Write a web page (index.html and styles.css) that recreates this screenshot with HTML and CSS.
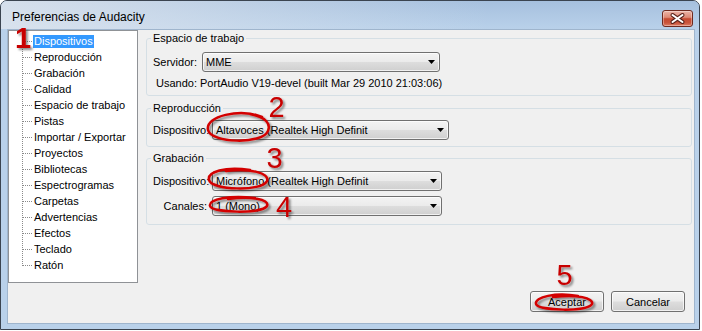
FILE: index.html
```html
<!DOCTYPE html>
<html lang="es">
<head>
<meta charset="utf-8">
<title>Preferencias de Audacity</title>
<link rel="stylesheet" href="styles.css">
</head>
<body>
<div class="window">
  <div class="titlebar">
    <span class="title">Preferencias de Audacity</span>
    <button class="close" aria-label="Cerrar">
      <svg width="31" height="17" viewBox="0 0 31 17">
        <path d="M10.5 5 L20.5 12 M20.5 5 L10.5 12" stroke="#5a231b" stroke-width="4" stroke-linecap="round"/>
        <path d="M10.5 5 L20.5 12 M20.5 5 L10.5 12" stroke="#ffffff" stroke-width="2" stroke-linecap="round"/>
      </svg>
    </button>
  </div>
  <div class="frame">
    <div class="client">
      <div class="main">
        <ul class="tree">
          <li class="selected"><span>Dispositivos</span></li>
          <li><span>Reproducción</span></li>
          <li><span>Grabación</span></li>
          <li><span>Calidad</span></li>
          <li><span>Espacio de trabajo</span></li>
          <li><span>Pistas</span></li>
          <li><span>Importar / Exportar</span></li>
          <li><span>Proyectos</span></li>
          <li><span>Bibliotecas</span></li>
          <li><span>Espectrogramas</span></li>
          <li><span>Carpetas</span></li>
          <li><span>Advertencias</span></li>
          <li><span>Efectos</span></li>
          <li><span>Teclado</span></li>
          <li><span>Ratón</span></li>
        </ul>
        <div class="pane">
          <fieldset class="group g1">
            <legend>Espacio de trabajo</legend>
            <div class="row">
              <span class="lbl left">Servidor:</span>
              <div class="combo"><span>MME</span></div>
            </div>
            <div class="info">Usando: PortAudio V19-devel (built Mar 29 2010 21:03:06)</div>
          </fieldset>
          <fieldset class="group g2">
            <legend>Reproducción</legend>
            <div class="row">
              <span class="lbl">Dispositivo:</span>
              <div class="combo"><span>Altavoces (Realtek High Definit</span></div>
            </div>
          </fieldset>
          <fieldset class="group g3">
            <legend>Grabación</legend>
            <div class="row">
              <span class="lbl">Dispositivo:</span>
              <div class="combo"><span>Micrófono (Realtek High Definit</span></div>
            </div>
            <div class="row second">
              <span class="lbl">Canales:</span>
              <div class="combo"><span>1 (Mono)</span></div>
            </div>
          </fieldset>
        </div>
      </div>
      <div class="buttons">
        <button class="btn">Aceptar</button>
        <button class="btn">Cancelar</button>
      </div>
    </div>
  </div>
</div>
<svg class="annot" width="702" height="331" viewBox="0 0 702 331">
  <defs>
    <filter id="sh" x="-30%" y="-30%" width="160%" height="160%">
      <feDropShadow dx="2" dy="2" stdDeviation="1.2" flood-color="#000" flood-opacity="0.45"/>
    </filter>
  </defs>
  <g class="marks" filter="url(#sh)">
    <path d="M262 117 C240 108, 205 116, 208 130 C211 143, 262 145, 268 131 C271 124, 266 117, 250 114"/>
    <path d="M250 170 C225 166, 207 172, 209 180 C211 190, 262 192, 267 181 C270 173, 250 168, 226 171"/>
    <path d="M255 198 C230 195, 208 199, 210 206 C212 213, 262 214, 267 206 C270 199, 250 196, 228 199"/>
    <path d="M578 296 C556 292, 534 297, 536 304 C538 311, 588 312, 592 304 C594 298, 577 294, 553 297"/>
  </g>
  <g class="nums" filter="url(#sh)">
    <text x="23" y="48" class="bold">1</text>
    <text x="276.5" y="117">2</text>
    <text x="274.5" y="168">3</text>
    <text x="284" y="217">4</text>
    <text x="564.5" y="285">5</text>
  </g>
</svg>
</body>
</html>
```
FILE: styles.css
```css
* { box-sizing: border-box; }
html, body { margin: 0; padding: 0; background: #ffffff; }
body {
  position: relative;
  width: 702px;
  height: 331px;
  overflow: hidden;
  font-family: "Liberation Sans", Arial, sans-serif;
  font-size: 11px;
  color: #000;
}
.window {
  width: 700px;
  height: 330px;
  border: 1px solid #3b4450;
  border-radius: 7px 7px 0 0;
  background: #b9d1ea;
  display: flex;
  flex-direction: column;
  overflow: hidden;
}
.titlebar {
  height: 28px;
  flex: none;
  display: flex;
  align-items: flex-start;
  background:
    linear-gradient(to right, rgba(222,229,238,0.85) 0%, rgba(222,229,238,0.4) 35%, rgba(222,229,238,0) 70%),
    linear-gradient(#a6c0de, #b9d1ea);
}
.title {
  padding: 9px 0 0 11px;
  font-size: 12px;
  line-height: 15px;
  color: #000;
}
.close {
  margin: 9px 6px 0 auto;
  width: 31px;
  height: 17px;
  padding: 0;
  border: 1px solid #6e2a20;
  border-radius: 3px;
  background: linear-gradient(#ecb5a8 0%, #de8a76 42%, #c54a31 52%, #c9543b 78%, #dd7d64 100%);
  box-shadow: inset 0 0 0 1px rgba(255,255,255,0.35);
  display: flex;
  align-items: center;
  justify-content: center;
}
.close svg { display: block; margin: -1px; }
.frame {
  flex: 1;
  display: flex;
  padding: 0 4px 5px 6px;
}
.client {
  flex: 1;
  display: flex;
  flex-direction: column;
  background: #f0f0f0;
  border: 1px solid #9fb5cd;
}
.main {
  display: flex;
  align-items: flex-start;
}
.tree {
  list-style: none;
  margin: 0;
  padding: 2px 0 0;
  width: 130px;
  height: 253px;
  flex: none;
  background: #fff;
  border: 1px solid #8f9296;
}
.tree li {
  height: 16px;
  display: flex;
  align-items: center;
  padding-left: 24px;
  white-space: nowrap;
  background:
    repeating-linear-gradient(to right, #8a8a8a 0 1px, transparent 1px 2px) 14px 8px / 9px 1px no-repeat,
    repeating-linear-gradient(to bottom, #8a8a8a 0 1px, transparent 1px 2px) 13px 0 / 1px 16px no-repeat;
}
.tree li:first-child {
  background-position: 14px 8px, 13px 8px;
  background-size: 9px 1px, 1px 8px;
}
.tree li:last-child {
  background-size: 9px 1px, 1px 9px;
}
.tree li span {
  padding: 0 1px;
  line-height: 13px;
}
.tree li.selected span {
  background: #3399ff;
  color: #fff;
}
.pane {
  flex: 1;
  margin-left: 8px;
  padding: 2px 2px 0 0;
  display: flex;
  flex-direction: column;
}
.group {
  margin: 0;
  min-width: 0;
  border: 1px solid #d5dfe5;
  border-radius: 3px;
  padding: 0 6px;
}
.group legend {
  padding: 0 2px;
  margin-left: -2px;
  line-height: 13px;
}
.g1 { padding-top: 7px; padding-bottom: 5px; }
.g2 { margin-top: 6px; padding-top: 5px; padding-bottom: 6px; }
.g3 { margin-top: 5px; padding-top: 6px; padding-bottom: 8px; }
.row {
  display: grid;
  align-items: center;
  column-gap: 5px;
}
.g1 .row { grid-template-columns: 44px 238px; }
.g2 .row { grid-template-columns: 54px 237px; }
.g3 .row { grid-template-columns: 54px 230px; }
.row.second { margin-top: 5px; }
.lbl { text-align: right; white-space: nowrap; }
.lbl.left { text-align: left; }
.info {
  margin-top: 5px;
  padding-left: 3px;
  line-height: 13px;
  white-space: nowrap;
}
.combo {
  height: 20px;
  display: flex;
  align-items: center;
  padding: 0 4px 0 3px;
  border: 1px solid #707070;
  border-radius: 3px;
  background: linear-gradient(#f3f3f3 0%, #ebebeb 48%, #dddddd 52%, #cfcfcf 100%);
  box-shadow: inset 0 0 0 1px rgba(255,255,255,0.7);
  white-space: nowrap;
  overflow: hidden;
}
.combo::after {
  content: "";
  flex: none;
  margin-left: auto;
  width: 7px;
  height: 4px;
  background: #000;
  clip-path: polygon(0 0, 100% 0, 50% 100%);
}
.buttons {
  display: flex;
  justify-content: flex-end;
  gap: 7px;
  padding: 8px 9px 0 0;
}
.btn {
  width: 74px;
  height: 21px;
  padding: 0;
  font-family: "Liberation Sans", Arial, sans-serif;
  font-size: 11px;
  color: #000;
  border: 1px solid #707070;
  border-radius: 3px;
  background: linear-gradient(#f3f3f3 0%, #ebebeb 48%, #dddddd 52%, #cfcfcf 100%);
  box-shadow: inset 0 0 0 1px rgba(255,255,255,0.7);
}
.annot {
  position: absolute;
  left: 0;
  top: 0;
  pointer-events: none;
}
.marks path {
  fill: none;
  stroke: #d30000;
  stroke-width: 2.5;
  stroke-linecap: round;
}
.nums text {
  font-family: "Liberation Sans", Arial, sans-serif;
  font-size: 29px;
  fill: #c80000;
  text-anchor: middle;
}
.nums text.bold { font-weight: bold; }
```
